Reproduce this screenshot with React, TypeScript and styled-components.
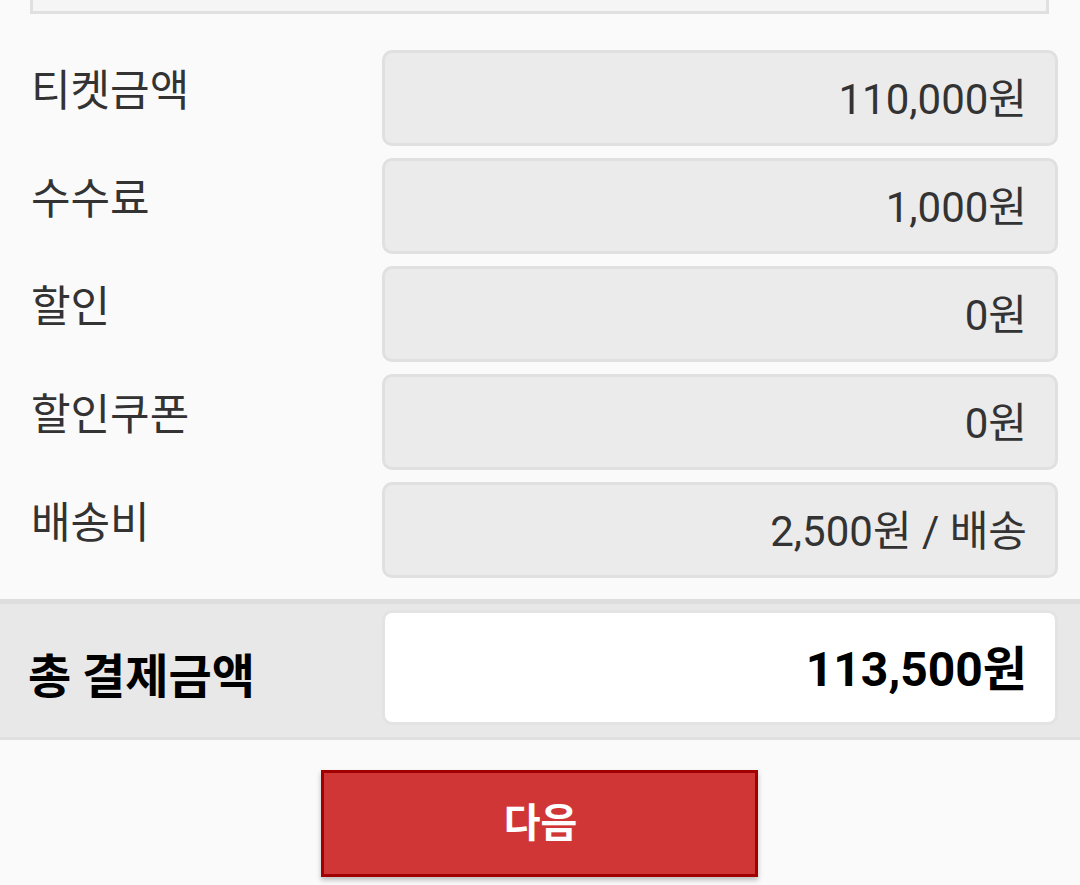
import React from "react";
import styled, { createGlobalStyle } from "styled-components";

const GlobalStyle = createGlobalStyle`
  html, body {
    margin: 0;
    padding: 0;
    background: #fafafa;
  }
  body {
    font-family: Roboto, "Noto Sans CJK KR", sans-serif;
  }
  * { box-sizing: border-box; }
`;

const Page = styled.div`
  width: 1080px;
  height: 885px;
  overflow: hidden;
  background: #fafafa;
  display: flex;
  flex-direction: column;
`;

const TopBox = styled.div`
  margin: 0 31px 0 30px;
  height: 14px;
  background: #f5f5f5;
  border: 3px solid #e0e0e0;
  border-top: none;
`;

const List = styled.div`
  display: flex;
  flex-direction: column;
  gap: 12px;
  padding: 36px 22px 0 0;
`;

const Row = styled.div`
  display: grid;
  grid-template-columns: 382px 1fr;
  align-items: center;
  height: 96px;
`;

const Label = styled.div<{ $bold?: boolean }>`
  padding-left: ${(p) => (p.$bold ? "28px" : "31px")};
  font-family: "Noto Sans CJK KR", sans-serif;
  font-size: ${(p) => (p.$bold ? "47px" : "43px")};
  font-weight: ${(p) => (p.$bold ? 700 : 400)};
  color: ${(p) => (p.$bold ? "#000" : "#333")};
  line-height: 1;
  margin-bottom: ${(p) => (p.$bold ? "-10px" : "22px")};
`;

const Field = styled.div<{ $total?: boolean }>`
  height: ${(p) => (p.$total ? "115px" : "96px")};
  display: flex;
  align-items: center;
  justify-content: flex-end;
  padding: 0 28px 6px 0;
  border: 3px solid ${(p) => (p.$total ? "#e3e3e3" : "#e0e0e0")};
  border-radius: 10px;
  background: ${(p) => (p.$total ? "#ffffff" : "#ebebeb")};
  font-family: Roboto, "Noto Sans CJK KR", sans-serif;
  font-size: ${(p) => (p.$total ? "48px" : "42px")};
  font-weight: ${(p) => (p.$total ? 700 : 400)};
  color: ${(p) => (p.$total ? "#000" : "#333")};
  white-space: nowrap;
`;

const TotalBand = styled.div`
  margin-top: 21px;
  background: #e8e8e8;
  border-top: 5px solid #dedede;
  border-bottom: 3px solid #e0e0e0;
  padding: 6px 22px 12px 0;
`;

const TotalRow = styled.div`
  display: grid;
  grid-template-columns: 382px 1fr;
  align-items: center;
`;

const ButtonWrap = styled.div`
  display: flex;
  justify-content: center;
  padding-top: 30px;
`;

const NextButton = styled.button`
  width: 437px;
  height: 107px;
  margin-left: -1px;
  background: #d13636;
  border: 3px solid #a00000;
  border-radius: 0;
  box-shadow: 0 3px 5px rgba(0, 0, 0, 0.25);
  color: #fff;
  font-family: "Noto Sans CJK KR", sans-serif;
  font-size: 40px;
  font-weight: 700;
  display: flex;
  align-items: center;
  justify-content: center;
  padding: 0 0 8px 2px;
  cursor: pointer;
`;

const rows: { label: string; value: string }[] = [
  { label: "티켓금액", value: "110,000원" },
  { label: "수수료", value: "1,000원" },
  { label: "할인", value: "0원" },
  { label: "할인쿠폰", value: "0원" },
  { label: "배송비", value: "2,500원 / 배송" },
];

export default function App() {
  return (
    <>
      <GlobalStyle />
      <Page>
        <TopBox />
        <List>
          {rows.map((r) => (
            <Row key={r.label}>
              <Label>{r.label}</Label>
              <Field>{r.value}</Field>
            </Row>
          ))}
        </List>
        <TotalBand>
          <TotalRow>
            <Label $bold>총 결제금액</Label>
            <Field $total>113,500원</Field>
          </TotalRow>
        </TotalBand>
        <ButtonWrap>
          <NextButton>다음</NextButton>
        </ButtonWrap>
      </Page>
    </>
  );
}
